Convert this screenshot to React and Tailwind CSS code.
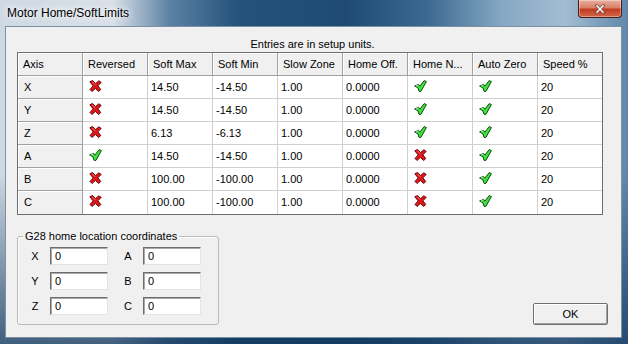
import React from "react";

const cols = ["Axis", "Reversed", "Soft Max", "Soft Min", "Slow Zone", "Home Off.", "Home N...", "Auto Zero", "Speed %"];

// true = green check, false = red cross
const rows = [
  ["X", false, "14.50", "-14.50", "1.00", "0.0000", true, true, "20"],
  ["Y", false, "14.50", "-14.50", "1.00", "0.0000", true, true, "20"],
  ["Z", false, "6.13", "-6.13", "1.00", "0.0000", true, true, "20"],
  ["A", true, "14.50", "-14.50", "1.00", "0.0000", false, true, "20"],
  ["B", false, "100.00", "-100.00", "1.00", "0.0000", false, true, "20"],
  ["C", false, "100.00", "-100.00", "1.00", "0.0000", false, true, "20"],
];

function RedX() {
  return (
    <svg width="13" height="12" viewBox="0 0 13 12">
      <path
        d="M0.8 1.8 L3.6 0.5 L6.6 3.6 L9.8 0.8 L12.2 2.4 L8.9 5.8 L11.8 9.6 L9.6 11.5 L6.4 8.4 L3 11.5 L1 9.4 L4.2 5.9 Z"
        fill="#e0161a"
        stroke="#6b0a0a"
        strokeWidth="1"
        strokeLinejoin="round"
      />
      <path d="M3.3 1.9 L6.3 4.9" stroke="#ff9090" strokeWidth="0.8" />
    </svg>
  );
}

function GreenCheck() {
  return (
    <svg width="13" height="12" viewBox="0 0 13 12">
      <path
        d="M0.6 6 L4.6 4.4 L5.8 6.2 L10.2 0.6 L12.4 1.6 L6.9 11.4 L5.1 11.4 L3.9 7.8 Z"
        fill="#3fe03f"
        stroke="#0b4f0b"
        strokeWidth="1"
        strokeLinejoin="round"
      />
      <path d="M1.8 6 L4.3 5.1" stroke="#c0ffc0" strokeWidth="0.8" />
    </svg>
  );
}

function Grid() {
  return (
    <div className="w-fit border border-[#6e6e6e] bg-white">
      <div className="grid h-[23px] grid-cols-[65px_65px_65px_65px_65px_65px_65px_65px_64px]">
        {cols.map((c, i) => (
          <div
            key={c}
            className={
              "flex items-center border-b border-[#a0a0a0] bg-[#f0f0f0] pl-[5px] shadow-[inset_1px_1px_0_#ffffff] " +
              (i < 8 ? "border-r" : "")
            }
          >
            {c}
          </div>
        ))}
      </div>
      {rows.map((r, ri) => (
        <div key={r[0]} className="grid h-[23px] grid-cols-[65px_65px_65px_65px_65px_65px_65px_65px_64px]">
          {r.map((v, i) => {
            const last = ri === rows.length - 1;
            if (i === 0) {
              return (
                <div
                  key={i}
                  className={
                    "flex items-center border-r border-[#a0a0a0] bg-[#f0f0f0] pl-[6px] shadow-[inset_1px_1px_0_#ffffff] " +
                    (last ? "" : "border-b")
                  }
                >
                  {v}
                </div>
              );
            }
            return (
              <div
                key={i}
                className={
                  "flex items-center border-[#d0d0d0] " +
                  (i < 8 ? "border-r " : "") +
                  (last ? "" : "border-b ") +
                  (typeof v === "boolean" ? "pb-[3px] pl-[6px]" : "pl-[3px]")
                }
              >
                {typeof v === "boolean" ? v ? <GreenCheck /> : <RedX /> : v}
              </div>
            );
          })}
        </div>
      ))}
    </div>
  );
}

function Field({ label, ml }) {
  return (
    <>
      <span className={"w-[12px] text-center " + ml}>{label}</span>
      <input
        readOnly
        value="0"
        className="ml-[9px] h-[18px] w-[58px] border border-[#e2e3ea] border-t-[#6e6e6e] border-l-[#6e6e6e] bg-white pl-[4px] text-[11px] shadow-[inset_1px_1px_0_#a9a9a9] outline-none"
      />
    </>
  );
}

export default function App() {
  return (
    <div className="flex h-[344px] w-[628px] flex-col bg-[linear-gradient(180deg,rgba(0,0,0,0)_0%,rgba(0,0,0,0)_50%,rgba(16,54,92,0.75)_100%),linear-gradient(90deg,#cfd9e3_0%,#d9e0e8_18%,#5b82a4_27%,#24527a_38%,#1f4b72_55%,#3b6990_68%,#86a8c4_80%,#a3bdd2_90%,#5f87aa_100%)] font-['Liberation_Sans',Arial,sans-serif] text-[11px] text-black">
      {/* title bar */}
      <div className="relative h-[26px] shrink-0">
        <div className="pl-[7px] pt-[5px] text-[12px] leading-[16px] [text-shadow:0_0_6px_#ffffff,0_0_10px_#ffffff]">
          Motor Home/SoftLimits
        </div>
        <div className="absolute right-[6px] top-0 flex h-[18px] w-[44px] items-center justify-center rounded-b-[4px] border border-t-0 border-[#4a1c15] bg-[linear-gradient(180deg,#eab0a2_0%,#d98068_45%,#c33b1f_55%,#d2674a_100%)] shadow-[inset_0_0_0_1px_rgba(255,255,255,0.35)]">
          <svg width="12" height="10" viewBox="0 0 12 10">
            <path
              d="M1 1.2 L3.4 0.6 L6 3.4 L8.6 0.6 L11 1.2 L7.6 5 L11 8.8 L8.6 9.4 L6 6.6 L3.4 9.4 L1 8.8 L4.4 5 Z"
              fill="#ffffff"
              stroke="#5a2a22"
              strokeWidth="0.8"
              strokeLinejoin="round"
            />
          </svg>
        </div>
      </div>

      {/* client area */}
      <div className="mb-[6px] ml-[5px] mr-[6px] flex flex-1 flex-col border border-[#7d91a5] bg-[#f0f0f0] pb-[12px] pl-[11px] pr-[13px] pt-[10px]">
        <div className="h-[15px] text-center leading-[15px]">Entries are in setup units.</div>
        <Grid />

        <div className="mt-auto flex items-end justify-between">
          <fieldset className="w-[202px] rounded-[3px] border border-[#b9b9b9] pb-[9px] pt-[4px] shadow-[inset_1px_1px_0_#ffffff]">
            <legend className="ml-[5px] px-[2px] leading-[14px]">G28 home location coordinates</legend>
            <div className="flex flex-col gap-[7px]">
              {[
                ["X", "A"],
                ["Y", "B"],
                ["Z", "C"],
              ].map(([a, b]) => (
                <div key={a} className="flex items-center">
                  <Field label={a} ml="ml-[11px]" />
                  <Field label={b} ml="ml-[14px]" />
                </div>
              ))}
            </div>
          </fieldset>

          <button className="h-[22px] w-[75px] rounded-[2px] border border-[#707070] bg-[#f0f0f0] text-[11px] shadow-[inset_1px_1px_0_#ffffff,inset_-1px_-1px_0_#a0a0a0]">
            OK
          </button>
        </div>
      </div>
    </div>
  );
}
